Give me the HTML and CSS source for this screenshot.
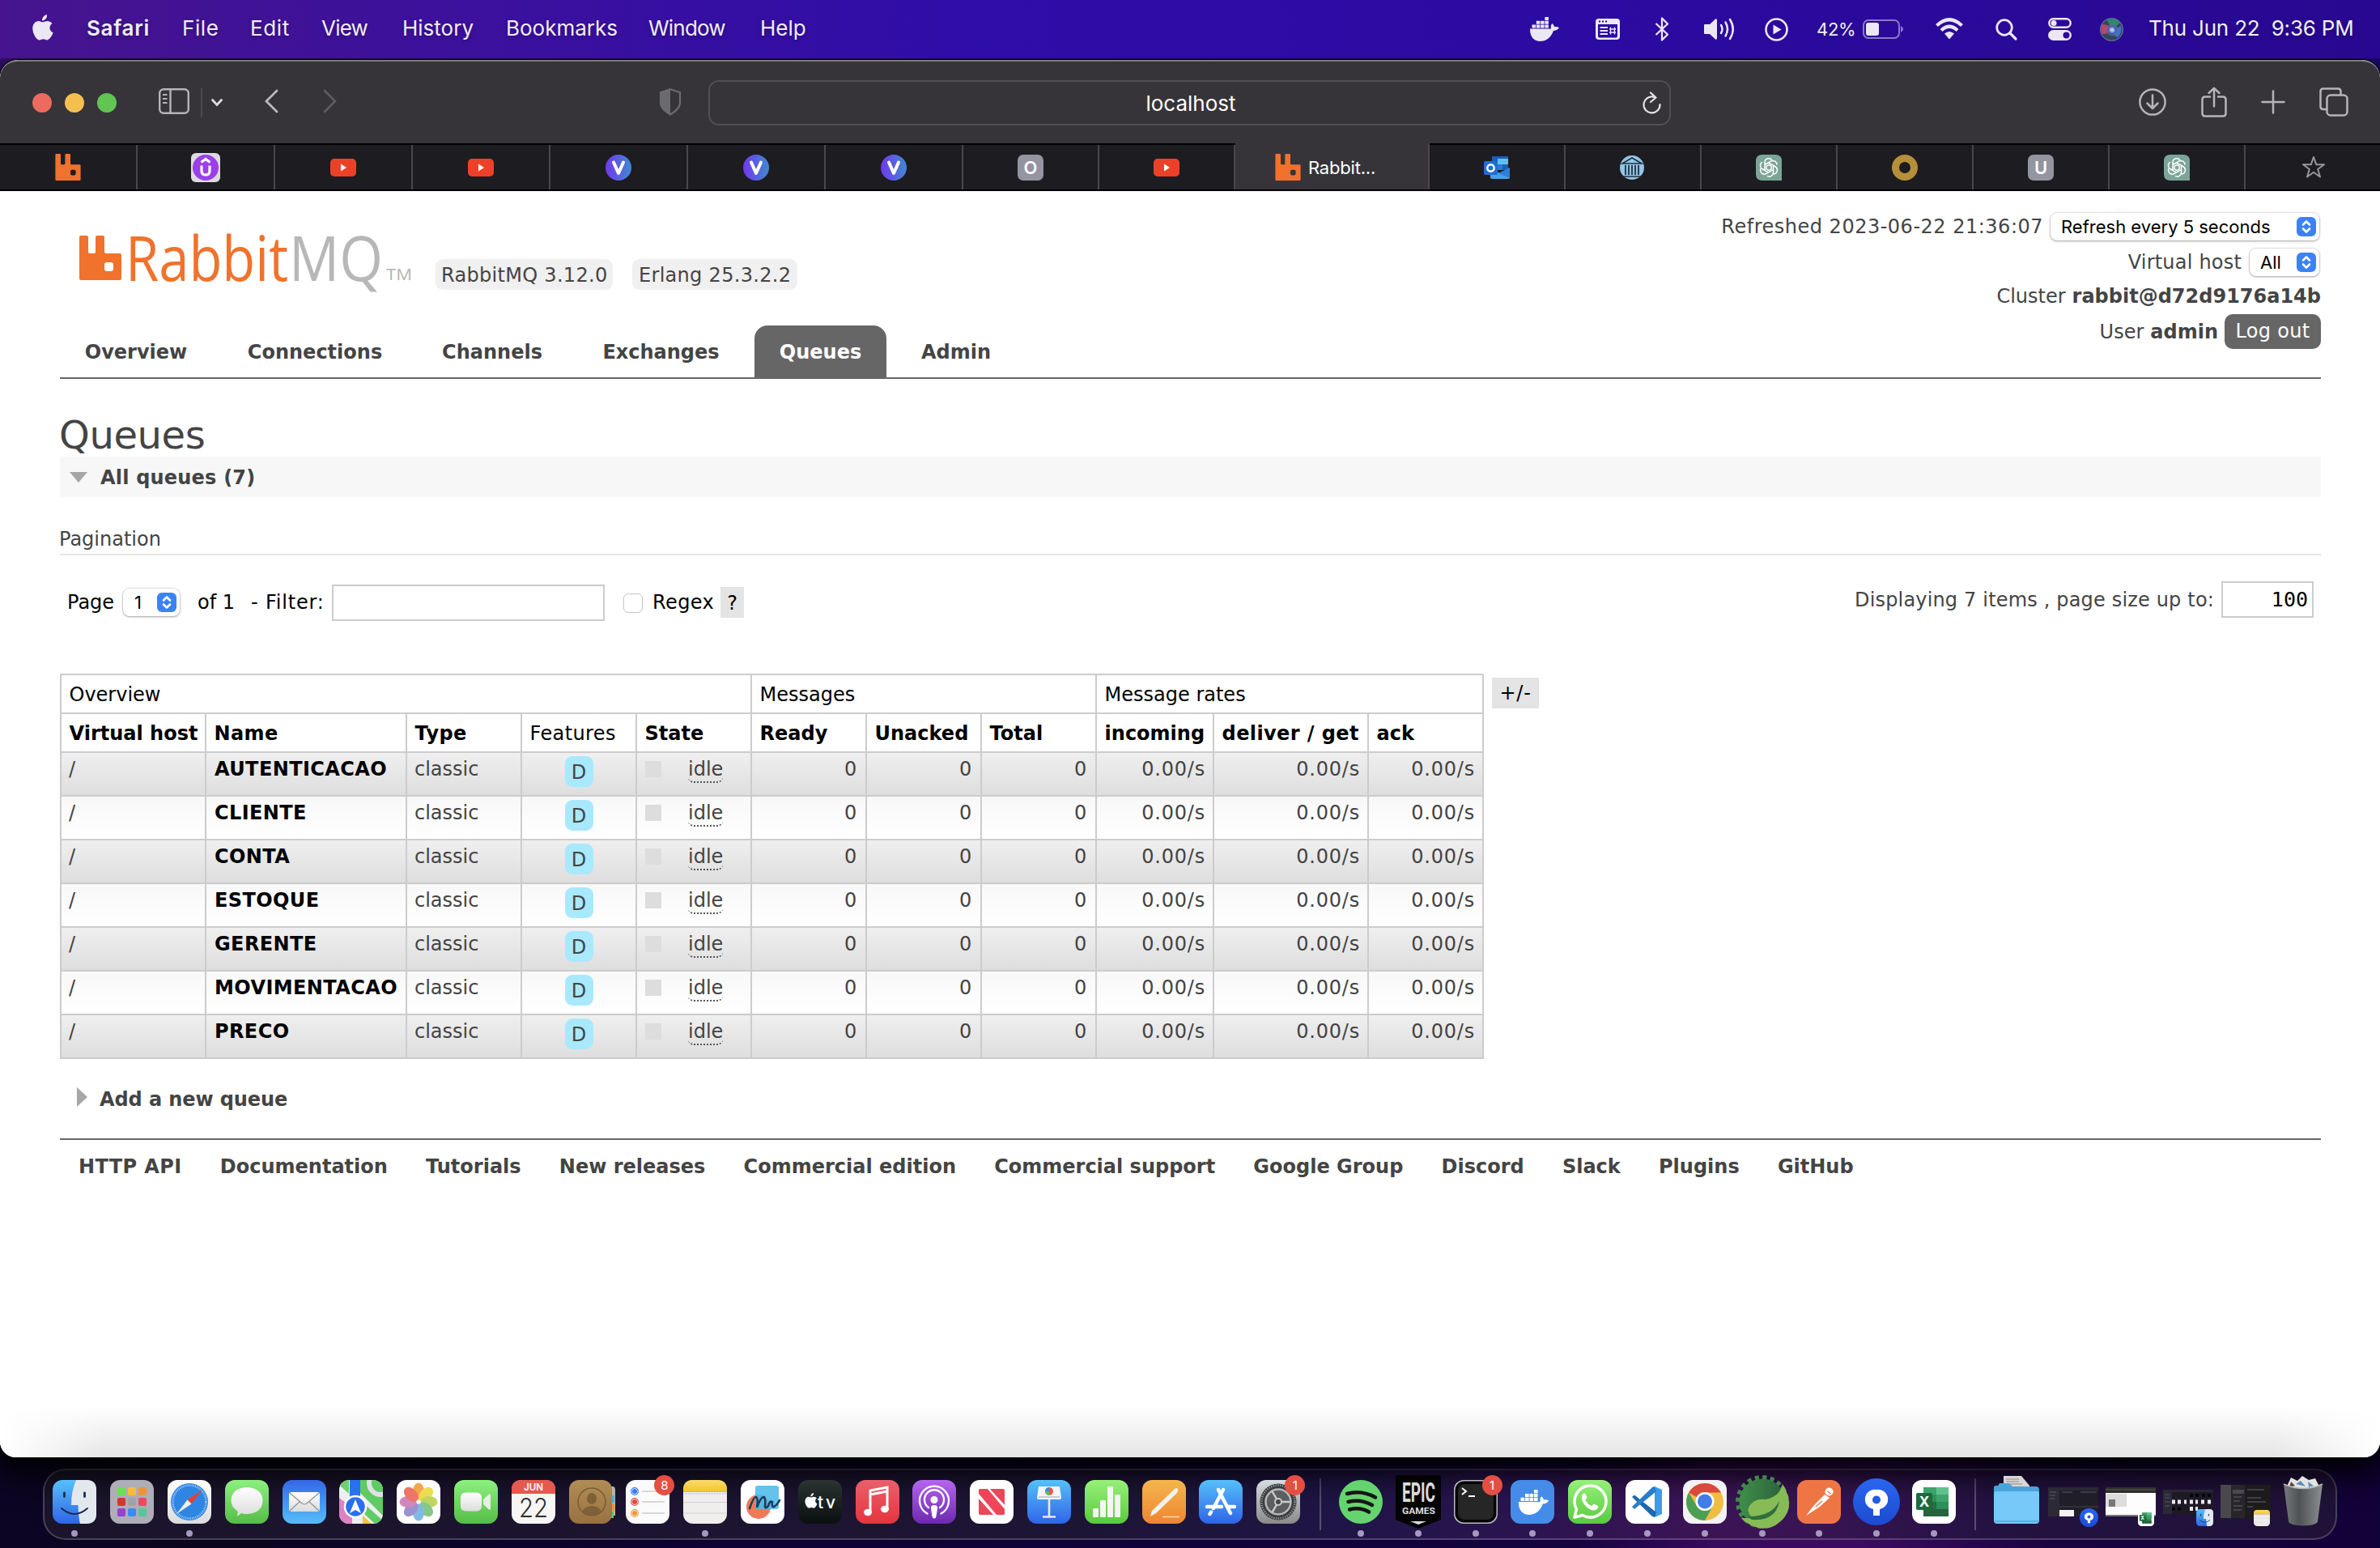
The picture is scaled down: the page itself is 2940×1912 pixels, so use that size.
FILE: index.html
```html
<!DOCTYPE html>
<html lang="en">
<head>
<meta charset="utf-8">
<title>RabbitMQ Management</title>
<link rel="stylesheet" href="styles.css">
</head>
<body>
<svg class="defs" width="0" height="0" aria-hidden="true">
  <defs>
    <linearGradient id="gBlue" x2="0" y2="1"><stop stop-color="#56c0fa"/><stop offset="1" stop-color="#2f64e8"/></linearGradient>
    <linearGradient id="gMail" x2="0" y2="1"><stop stop-color="#3567e8"/><stop offset="1" stop-color="#56bdf8"/></linearGradient>
    <linearGradient id="gGreen" x2="0" y2="1"><stop stop-color="#8cf07f"/><stop offset="1" stop-color="#55bd47"/></linearGradient>
    <linearGradient id="gLime" x2="0" y2="1"><stop stop-color="#97f07a"/><stop offset="1" stop-color="#58cb3c"/></linearGradient>
    <linearGradient id="gWhite" x2="0" y2="1"><stop stop-color="#fff"/><stop offset="1" stop-color="#dcdcdc"/></linearGradient>
    <linearGradient id="gRed" x2="0" y2="1"><stop stop-color="#e9606b"/><stop offset="1" stop-color="#e6343f"/></linearGradient>
    <linearGradient id="gPurple" x2="0" y2="1"><stop stop-color="#b565ee"/><stop offset="1" stop-color="#6c29b0"/></linearGradient>
    <linearGradient id="gOrange" x2="0" y2="1"><stop stop-color="#f5b64c"/><stop offset="1" stop-color="#ee8532"/></linearGradient>
    <linearGradient id="gBrown" x2="0" y2="1"><stop stop-color="#b08d55"/><stop offset="1" stop-color="#997142"/></linearGradient>
    <linearGradient id="gDark" x2="0" y2="1"><stop stop-color="#2a3432"/><stop offset="1" stop-color="#0b0f10"/></linearGradient>
    <linearGradient id="gSteel" x2="0" y2="1"><stop stop-color="#d5dce2"/><stop offset="1" stop-color="#8c8a88"/></linearGradient>
    <linearGradient id="gNote" x2="0" y2="1"><stop stop-color="#fbdc6b"/><stop offset="1" stop-color="#f5c52e"/></linearGradient>
    <linearGradient id="gSpring"><stop stop-color="#3f8f4a"/><stop offset="1" stop-color="#2c5f3c"/></linearGradient>
    <linearGradient id="gBin"><stop stop-color="#77797c"/><stop offset=".4" stop-color="#4f5255"/><stop offset="1" stop-color="#8d9093"/></linearGradient>
    <linearGradient id="gTree" x2="0" y2="1"><stop stop-color="#2a66f0"/><stop offset="1" stop-color="#1c4bd0"/></linearGradient>
    <linearGradient id="gV"><stop stop-color="#7138f0"/><stop offset="1" stop-color="#3f8ad0"/></linearGradient>
    <radialGradient id="gSiri"><stop stop-color="#fff"/><stop offset=".35" stop-color="#8fb9f0"/><stop offset=".65" stop-color="#4c4fae"/><stop offset="1" stop-color="#5a7f8f"/></radialGradient>
    <symbol id="rabbit" viewBox="0 0 52 55"><path fill="#f0722c" fill-rule="evenodd" d="M2 0H9Q11 0 11 2V20Q11 22 13 22H18Q20 22 20 20V2Q20 0 22 0H29Q31 0 31 2V20Q31 22 33 22H50Q52 22 52 24V53Q52 55 50 55H2Q0 55 0 53V2Q0 0 2 0ZM34 33Q31 33 31 36V41Q31 44 34 44H39Q42 44 42 41V36Q42 33 39 33Z"/></symbol>
    <symbol id="youtube" viewBox="0 0 32 32"><rect y="5" width="32" height="22" rx="5" fill="#ec4128"/><path d="M13 11.500V20.500L20 16Z" fill="#fff"/></symbol>
    <symbol id="vmark" viewBox="0 0 32 32"><circle cx="16" cy="16" r="16" fill="url(#gV)"/><path d="M10 9.500L16 23L22 9.500" fill="none" stroke="#fff" stroke-width="4" stroke-linecap="round" stroke-linejoin="round"/></symbol>
    <symbol id="gpt" viewBox="0 0 32 32"><path d="M8 0H24Q32 0 32 8V32H8Q0 32 0 24V8Q0 0 8 0Z" fill="#7aa597"/><g fill="none" stroke="#fff" stroke-width="1.500"><path id="petal" d="M11 19V9.800A5 5 0 0 1 20 6.800M11 12.500L18.500 8.200A5 5 0 0 1 26 12.500"/><use href="#petal" transform="rotate(120 16 16)"/><use href="#petal" transform="rotate(240 16 16)"/><path d="M16 12.500L19 14.200V17.800L16 19.500L13 17.800V14.200Z"/></g></symbol>
    <symbol id="whale" viewBox="0 0 36 30"><path d="M0 14.500H26Q25 10 27.500 8Q29.500 9.500 30 12Q33.500 11.500 36 13Q34.500 16.500 29 17Q24 30 12 30Q0 29 0 14.500Z"/><path d="M2.500 9.500h4.500v4h-4.500zM7.800 9.500h4.500v4h-4.500zM13.100 9.500h4.500v4h-4.500zM18.400 9.500h4.500v4h-4.500zM7.800 4.800h4.500v4h-4.500zM13.100 4.800h4.500v4h-4.500zM18.400 4.800h4.500v4h-4.500zM18.400 0h4.500v4h-4.500z"/></symbol>
    <symbol id="apple" viewBox="0 0 26 32"><path d="M18 0Q18.500 3 16.500 5.200Q14.500 7.500 12 7.400Q11.800 4.500 13.700 2.400Q15.500 .3 18 0ZM24.500 11Q21.500 13 21.500 16.500Q21.600 20.700 25.600 22.300Q24.800 25 23 27.600Q20.700 31.300 18.400 31.400Q17 31.400 15.600 30.700Q13.500 29.800 11.300 30.700Q9.700 31.500 8.500 31.500Q6 31.400 3.300 27.300Q.2 22.500 .2 17.300Q.3 12.500 3 10Q5 8.100 7.600 8.100Q9.300 8.100 11 8.900Q13 9.600 15 8.700Q17.200 7.800 19 7.900Q22.600 8.200 24.500 11Z"/></symbol>
    <symbol id="updown" viewBox="0 0 24 24"><rect width="24" height="24" rx="6" fill="#3b82f6"/><path d="M8 9.500L12 5.500L16 9.500M8 14.500L12 18.500L16 14.500" fill="none" stroke="#fff" stroke-width="2.600" stroke-linecap="round" stroke-linejoin="round"/></symbol>
    <symbol id="finder" viewBox="0 0 54 54"><rect width="54" height="54" rx="12" fill="url(#gBlue)"/><path d="M29 0H42Q54 0 54 12V42Q54 54 42 54H34Q32 46 31.500 31H23Q23 14 29 0Z" fill="#e3e8ef"/><path d="M14.500 16V20.500M39.500 16V20.500" stroke="#1c2b45" stroke-width="2.800" stroke-linecap="round"/><path d="M11 35Q27 49 43 35" fill="none" stroke="#1c2b45" stroke-width="2" stroke-linecap="round"/></symbol>
    <symbol id="notes" viewBox="0 0 54 54"><rect width="54" height="54" rx="12" fill="#efeeec"/><path d="M0 14V12Q0 0 12 0H42Q54 0 54 12V14Z" fill="url(#gNote)"/><path d="M0 14.500H54" stroke="#b9b5a8" stroke-width="1.200"/><path d="M2 17H53" stroke="#aaa" stroke-dasharray="1 1"/><path d="M0 27.500H54M0 41H54" stroke="#d2d1cf" stroke-width="1.200"/></symbol>
    <symbol id="tree" viewBox="0 0 58 58"><circle cx="29" cy="29" r="29" fill="url(#gTree)"/><path d="M29 14A12 12 0 0 1 33 38V46H25V38A12 12 0 0 1 29 14Z" fill="#fff"/><circle cx="29" cy="26.500" r="5" fill="#235be4"/></symbol>
    <symbol id="excel" viewBox="0 0 54 54"><rect width="54" height="54" rx="12" fill="#fff"/><path d="M14 9H45V45H14Z" fill="#2d8f59"/><path d="M30 9H45V18H30Z" fill="#5ec38a"/><path d="M30 18H45V27H30ZM14 9H30V18H14Z" fill="#3ea36c"/><path d="M14 36H45V45H14Z" fill="#27633f"/><path d="M14 27H30V36H14Z" fill="#2a6b43"/><rect x="5" y="16" width="20" height="21" rx="2" fill="#1d6b3d"/><text x="15" y="32.500" text-anchor="middle" font-size="17" font-weight="700" fill="#fff">X</text></symbol>
  </defs>
</svg>

<header class="menubar">
  <svg class="apple" width="26" height="32" fill="#ece7f4"><use href="#apple"/></svg>
  <nav class="menus">
    <span class="app">Safari</span><span class="loose">File</span><span class="loose">Edit</span><span class="tight">View</span><span>History</span><span>Bookmarks</span><span class="tight">Window</span><span>Help</span>
  </nav>
  <div class="status">
    <svg width="36" height="30" fill="#ece7f4"><use href="#whale"/></svg>
    <svg width="30" height="26" viewBox="0 0 30 26"><path fill="#ece7f4" fill-rule="evenodd" d="M4 0H26Q30 0 30 4V22Q30 26 26 26H4Q0 26 0 22V4Q0 0 4 0ZM3 7V21.500Q3 23.500 5 23.500H25Q27 23.500 27 21.500V7ZM4 2.500V4.500H6V2.500ZM8 2.500V4.500H10V2.500ZM12 2.500V4.500H14V2.500Z"/><path d="M5.500 11H15M5.500 15H15M5.500 19H15" stroke="#ece7f4" stroke-width="2"/><path d="M18.500 10.500V19.500M23.500 10.500V19.500M17 13H25M17 17H25" stroke="#ece7f4" stroke-width="1.400"/></svg>
    <svg width="18" height="30" viewBox="0 0 18 30"><path d="M1.500 8L16 21.500L9 28.500V1.500L16 8.500L1.500 22" fill="none" stroke="#ece7f4" stroke-width="2.300" stroke-linejoin="round"/></svg>
    <svg width="40" height="30" viewBox="0 0 40 30"><path d="M0 10Q0 9 1 9H7L14 2.500Q16 1.500 16 4V26Q16 28.500 14 27.500L7 21H1Q0 21 0 20Z" fill="#ece7f4"/><path d="M21 10Q24 15 21 20M26.500 6.500Q31.500 15 26.500 23.500M32 3Q39.500 15 32 27" fill="none" stroke="#ece7f4" stroke-width="2.500" stroke-linecap="round"/></svg>
    <svg width="29" height="29" viewBox="0 0 29 29"><circle cx="14.500" cy="14.500" r="13" fill="none" stroke="#ece7f4" stroke-width="2.600"/><path d="M10.500 8.500V20.500L20.500 14.500Z" fill="#ece7f4"/></svg>
    <div class="power"><span>42%</span><svg width="50" height="24" viewBox="0 0 50 24"><rect x="1" y="1" width="44" height="22" rx="6" fill="none" stroke="#ece7f4" stroke-opacity=".5" stroke-width="2"/><rect x="4" y="4" width="16" height="16" rx="3" fill="#ece7f4"/><path d="M47 8Q50 9.500 50 12Q50 14.500 47 16Z" fill="#ece7f4" opacity=".5"/></svg></div>
    <svg width="34" height="26" viewBox="0 0 34 26"><path d="M1.500 8.500Q17 -6 32.500 8.500M7 14.500Q17 5 27 14.500" fill="none" stroke="#ece7f4" stroke-width="4.200"/><path d="M11 18.500Q17 13.500 23 18.500L17 25.500Z" fill="#ece7f4"/></svg>
    <svg width="27" height="27" viewBox="0 0 27 27"><circle cx="11" cy="11" r="9.300" fill="none" stroke="#ece7f4" stroke-width="2.700"/><path d="M18 18L25 25" stroke="#ece7f4" stroke-width="3.200" stroke-linecap="round"/></svg>
    <svg width="29" height="28" viewBox="0 0 29 28"><rect x="1.300" y="1.300" width="26.400" height="10.400" rx="5.200" fill="none" stroke="#ece7f4" stroke-width="2.400"/><circle cx="7" cy="6.500" r="3.500" fill="#ece7f4"/><rect y="15" width="29" height="13" rx="6.500" fill="#ece7f4"/><circle cx="22.500" cy="21.500" r="4" fill="#2b0b98"/></svg>
    <svg width="29" height="29" viewBox="0 0 29 29"><circle cx="14.500" cy="14.500" r="14" fill="#34465e" stroke="#6f8a9a"/><path d="M3 8Q12 8 14.500 14.500Q8 21 3 20Q0 14 3 8Z" fill="#d9456f" opacity=".8"/><path d="M8 3Q18 -1 25 6Q20 11 14.500 14Q12 6 8 3Z" fill="#2f9e76" opacity=".75"/><path d="M26 10Q28 18 22 24Q16 22 14.500 15Q20 14 26 10Z" fill="#3f7cf0" opacity=".8"/><circle cx="15" cy="15" r="7" fill="url(#gSiri)" opacity=".85"/></svg>
    <span class="clock">Thu Jun 22&nbsp; 9:36 PM</span>
  </div>
</header>

<main class="window">
  <div class="toolbar">
    <div class="lights"><i class="close"></i><i class="min"></i><i class="max"></i></div>
    <svg class="sidebar" width="38" height="32" viewBox="0 0 38 32" fill="none" stroke="#b5b4b8" stroke-width="2.400"><rect x="1.200" y="1.200" width="35.600" height="29.600" rx="5"/><path d="M14.500 1V31"/><path d="M5 8H10.500M5 13H10.500M5 18H10.500" stroke-width="2"/></svg>
    <i class="bar"></i>
    <svg class="chev" width="14" height="10" viewBox="0 0 14 10"><path d="M1.500 1.500L7 7.500L12.500 1.500" fill="none" stroke="#dddce0" stroke-width="2.800" stroke-linecap="round"/></svg>
    <svg class="back" width="17" height="30" viewBox="0 0 17 30"><path d="M15 2L2 15L15 28" fill="none" stroke="#b9b8bc" stroke-width="2.800" stroke-linecap="round"/></svg>
    <svg class="fwd" width="17" height="30" viewBox="0 0 17 30"><path d="M2 2L15 15L2 28" fill="none" stroke="#5d5c61" stroke-width="2.600" stroke-linecap="round"/></svg>
    <svg class="shield" width="28" height="34" viewBox="0 0 28 34"><path d="M14 1.200L26 5V19Q25 26 14 32.500Q3 26 2 19V5Z" fill="none" stroke="#6b6a6f" stroke-width="2.200"/><path d="M14 1L1.500 5V19Q3 26 14 33Z" fill="#6b6a6f"/></svg>
    <div class="address"><span>localhost</span><svg width="24" height="27" viewBox="0 0 24 27"><path d="M16 7.500A10 10 0 1 0 21.500 16M10 1.500L16.500 7.500L10 13" fill="none" stroke="#e4e3e6" stroke-width="2.200" stroke-linecap="round" stroke-linejoin="round"/></svg></div>
    <div class="tools">
      <svg width="34" height="34" viewBox="0 0 34 34"><circle cx="17" cy="17" r="15.600"/><path d="M17 8.500V25M10.500 18.500L17 25L23.500 18.500"/></svg>
      <svg width="32" height="38" viewBox="0 0 32 38"><path d="M11 12.500H5Q1.500 12.500 1.500 16V33Q1.500 36.500 5 36.500H27Q30.500 36.500 30.500 33V16Q30.500 12.500 27 12.500H21M16 24.500V2M9.500 8L16 1.800L22.500 8"/></svg>
      <svg width="28" height="28" viewBox="0 0 28 28"><path d="M14 .5V27.500M.5 14H27.500"/></svg>
      <svg width="36" height="36" viewBox="0 0 36 36"><rect x="9.500" y="9.500" width="25" height="25" rx="4.500"/><path d="M9 27H5Q1.500 27 1.500 23.500V5Q1.500 1.500 5 1.500H23Q26.500 1.500 26.500 5V9"/></svg>
    </div>
  </div>
  <div class="tabs">
    <div class="tab w170"><svg width="32" height="33"><use href="#rabbit"/></svg></div>
    <div class="tab w170"><svg width="36" height="36" viewBox="0 0 36 36"><rect width="36" height="36" rx="6" fill="#dedbe0"/><circle cx="18" cy="18" r="16" fill="#9b3fe8"/><path d="M13 15.500V22Q13 27 18 27Q23 27 23 22V15.500M12.500 11.500L18 7.500L23.500 11.500" fill="none" stroke="#fff" stroke-width="3.200"/></svg></div>
    <div class="tab w170"><svg width="32" height="32"><use href="#youtube"/></svg></div>
    <div class="tab w170"><svg width="32" height="32"><use href="#youtube"/></svg></div>
    <div class="tab w170"><svg width="32" height="32"><use href="#vmark"/></svg></div>
    <div class="tab w170"><svg width="32" height="32"><use href="#vmark"/></svg></div>
    <div class="tab w170"><svg width="32" height="32"><use href="#vmark"/></svg></div>
    <div class="tab"><b class="letter">O</b></div>
    <div class="tab"><svg width="32" height="32"><use href="#youtube"/></svg></div>
    <div class="tab active"><svg width="32" height="33"><use href="#rabbit"/></svg><span>Rabbit...</span></div>
    <div class="tab"><svg width="32" height="30" viewBox="0 0 32 30"><path d="M10 1H30V18H10Z" fill="#1a5fb8"/><path d="M17 4H30V11H17Z" fill="#5cc0f5"/><path d="M17 11H23V18H17Z" fill="#2b7cd3"/><path d="M8 16L20 22L32 15V27Q32 29 30 29H10Q8 29 8 27Z" fill="#4a9fe8"/><path d="M18 22L32 15V28Z" fill="#2f7fd6"/><rect y="7" width="17" height="17" rx="2" fill="#1f6fd0"/><circle cx="8.500" cy="15.500" r="4.200" fill="none" stroke="#fff" stroke-width="2.400"/></svg></div>
    <div class="tab"><svg width="34" height="34" viewBox="0 0 34 34"><circle cx="16" cy="17" r="15" fill="#93c5e6"/><path d="M4 12L16 5L28 12ZM5 28H27" fill="none" stroke="#20303c" stroke-width="1.600"/><path d="M8 14V26M12 14V26M16 14V26M20 14V26M24 14V26" stroke="#20303c" stroke-width="1.800"/></svg></div>
    <div class="tab"><svg width="32" height="32"><use href="#gpt"/></svg></div>
    <div class="tab"><svg width="32" height="32" viewBox="0 0 32 32"><circle cx="16" cy="16" r="11.500" fill="none" stroke="#b68f3b" stroke-width="9"/></svg></div>
    <div class="tab"><b class="letter">U</b></div>
    <div class="tab"><svg width="32" height="32"><use href="#gpt"/></svg></div>
    <div class="tab star"><svg width="30" height="29" viewBox="0 0 30 29"><path d="M15 2L18.200 11.200H28L20.200 17L23 26.500L15 20.800L7 26.500L9.800 17L2 11.200H11.800Z" fill="none" stroke="#98979c" stroke-width="2" stroke-linejoin="round"/></svg></div>
  </div>

  <div class="page">
    <div class="head">
      <div class="left">
        <div class="brand">
          <svg class="logo" width="412" height="84" viewBox="0 0 412 84"><use href="#rabbit" x="0" y="11" width="52" height="55"/><g font-family="'Open Sans', sans-serif"><text x="57" y="66.500" font-size="76" textLength="201" lengthAdjust="spacingAndGlyphs" fill="#f0722c">Rabbit</text><text x="259" y="66.500" font-size="76" textLength="116" lengthAdjust="spacingAndGlyphs" fill="#b7b7b7">MQ</text><text x="379" y="66" font-size="20" textLength="32" lengthAdjust="spacingAndGlyphs" fill="#b4b4b4">TM</text></g></svg>
          <span class="pill">RabbitMQ 3.12.0</span><span class="pill erl">Erlang 25.3.2.2</span>
        </div>
        <nav class="nav"><a>Overview</a><a>Connections</a><a>Channels</a><a>Exchanges</a><a class="on">Queues</a><a>Admin</a></nav>
      </div>
      <div class="info">
        <div class="r1"><span class="stamp">Refreshed 2023-06-22 21:36:07</span><span class="select s1">Refresh every 5 seconds<svg width="24" height="24"><use href="#updown"/></svg></span></div>
        <div class="r1"><span class="vh">Virtual host</span><span class="select s2">All<svg width="24" height="24"><use href="#updown"/></svg></span></div>
        <div class="r3"><span>Cluster</span><b>rabbit@d72d9176a14b</b></div>
        <div class="r4"><span>User</span><b>admin</b><button class="logout">Log out</button></div>
      </div>
    </div>

    <h1>Queues</h1>
    <h2><svg width="22" height="13" viewBox="0 0 22 13"><path d="M0 0H22L11 13Z" fill="#a6a6a6"/></svg>All queues (7)</h2>
    <h3>Pagination</h3>
    <div class="pager">
      <div class="ctl">
        <span class="pg">Page</span><span class="select s3">1<svg width="24" height="24"><use href="#updown"/></svg></span><span class="of">of 1</span><span class="fl">- Filter:</span><span class="input"></span><i class="check"></i><span class="rx">Regex</span><span class="help">?</span>
      </div>
      <div class="size"><span>Displaying 7 items , page size up to:</span><span class="input num">100</span></div>
    </div>

    <div class="list">
      <table>
        <colgroup><col class="c179"><col class="c248"><col class="c142"><col class="c142"><col class="c142"><col class="c142"><col class="c142"><col class="c142"><col class="c145"><col class="c191"><col class="c142"></colgroup>
        <thead>
          <tr><th colspan="5" class="n">Overview</th><th colspan="3" class="n">Messages</th><th colspan="3" class="n">Message rates</th></tr>
          <tr><th>Virtual host</th><th class="sp">Name</th><th class="sp">Type</th><th class="n sp">Features</th><th>State</th><th>Ready</th><th>Unacked</th><th>Total</th><th>incoming</th><th class="sp">deliver / get</th><th>ack</th></tr>
        </thead>
        <tbody>
          <tr><td>/</td><td class="q">AUTENTICACAO</td><td>classic</td><td class="f"><b>D</b></td><td><div class="st"><i></i><span>idle</span></div></td><td class="r">0</td><td class="r">0</td><td class="r">0</td><td class="r">0.00/s</td><td class="r">0.00/s</td><td class="r">0.00/s</td></tr>
          <tr><td>/</td><td class="q">CLIENTE</td><td>classic</td><td class="f"><b>D</b></td><td><div class="st"><i></i><span>idle</span></div></td><td class="r">0</td><td class="r">0</td><td class="r">0</td><td class="r">0.00/s</td><td class="r">0.00/s</td><td class="r">0.00/s</td></tr>
          <tr><td>/</td><td class="q">CONTA</td><td>classic</td><td class="f"><b>D</b></td><td><div class="st"><i></i><span>idle</span></div></td><td class="r">0</td><td class="r">0</td><td class="r">0</td><td class="r">0.00/s</td><td class="r">0.00/s</td><td class="r">0.00/s</td></tr>
          <tr><td>/</td><td class="q">ESTOQUE</td><td>classic</td><td class="f"><b>D</b></td><td><div class="st"><i></i><span>idle</span></div></td><td class="r">0</td><td class="r">0</td><td class="r">0</td><td class="r">0.00/s</td><td class="r">0.00/s</td><td class="r">0.00/s</td></tr>
          <tr><td>/</td><td class="q">GERENTE</td><td>classic</td><td class="f"><b>D</b></td><td><div class="st"><i></i><span>idle</span></div></td><td class="r">0</td><td class="r">0</td><td class="r">0</td><td class="r">0.00/s</td><td class="r">0.00/s</td><td class="r">0.00/s</td></tr>
          <tr><td>/</td><td class="q">MOVIMENTACAO</td><td>classic</td><td class="f"><b>D</b></td><td><div class="st"><i></i><span>idle</span></div></td><td class="r">0</td><td class="r">0</td><td class="r">0</td><td class="r">0.00/s</td><td class="r">0.00/s</td><td class="r">0.00/s</td></tr>
          <tr><td>/</td><td class="q">PRECO</td><td>classic</td><td class="f"><b>D</b></td><td><div class="st"><i></i><span>idle</span></div></td><td class="r">0</td><td class="r">0</td><td class="r">0</td><td class="r">0.00/s</td><td class="r">0.00/s</td><td class="r">0.00/s</td></tr>
        </tbody>
      </table>
      <span class="pm">+/-</span>
    </div>

    <div class="add"><svg width="13" height="24" viewBox="0 0 13 24"><path d="M0 0L13 12L0 24Z" fill="#a6a6a6"/></svg>Add a new queue</div>
    <footer class="foot"><a class="api">HTTP API</a><a>Documentation</a><a>Tutorials</a><a>New releases</a><a>Commercial edition</a><a>Commercial support</a><a>Google Group</a><a>Discord</a><a>Slack</a><a>Plugins</a><a>GitHub</a></footer>
  </div>
</main>

<div class="dock">
  <div class="slot run"><svg class="ic"><use href="#finder"/></svg></div>
  <div class="slot"><svg class="ic" viewBox="0 0 54 54"><rect width="54" height="54" rx="12" fill="#aeadb8"/><g><rect x="9" y="9" width="10" height="10" rx="2" fill="#6be052"/><rect x="22" y="9" width="10" height="10" rx="2" fill="#f5bb3a"/><rect x="35" y="9" width="10" height="10" rx="2" fill="#ee9436"/><rect x="9" y="22" width="10" height="10" rx="2" fill="#d8352f"/><rect x="22" y="22" width="10" height="10" rx="2" fill="#9fa3a8"/><rect x="35" y="22" width="10" height="10" rx="2" fill="#f0475e"/><rect x="9" y="35" width="10" height="10" rx="2" fill="#9343d3"/><rect x="22" y="35" width="10" height="10" rx="2" fill="#3a8bf5"/><rect x="35" y="35" width="10" height="10" rx="2" fill="#57c79a"/></g></svg></div>
  <div class="slot run"><svg class="ic" viewBox="0 0 54 54"><rect width="54" height="54" rx="12" fill="url(#gWhite)"/><circle cx="27" cy="27" r="23" fill="#2f86e2"/><circle cx="27" cy="27" r="20.500" fill="none" stroke="#bfe0fb" stroke-width="2.500" stroke-dasharray=".8 1.350"/><path d="M43 12L29.500 29.500L24.500 24.500Z" fill="#e8402f"/><path d="M11 42L24.500 24.500L29.500 29.500Z" fill="#f0f0f2"/></svg></div>
  <div class="slot"><svg class="ic" viewBox="0 0 54 54"><rect width="54" height="54" rx="12" fill="url(#gGreen)"/><path d="M27 9Q46 10 46.500 25.500Q46 41.500 26 42Q23 42 20 41Q18 43.500 14.500 44.500Q16.500 41 15.500 38.500Q7.500 33 7.500 25.500Q8 10 27 9Z" fill="url(#gWhite)"/></svg></div>
  <div class="slot"><svg class="ic" viewBox="0 0 54 54"><rect width="54" height="54" rx="12" fill="url(#gMail)"/><rect x="8" y="15" width="38" height="24" rx="3" fill="url(#gWhite)"/><path d="M9 16L24 29Q27 31 30 29L45 16M9 38L21 27M45 38L33 27" fill="none" stroke="#8f9296" stroke-width="1.200"/></svg></div>
  <div class="slot"><svg class="ic" viewBox="0 0 54 54"><clipPath id="mc"><rect width="54" height="54" rx="12"/></clipPath><g clip-path="url(#mc)"><rect width="54" height="54" fill="#eceef0"/><path d="M0 0H12V17L0 6Z" fill="#6fd06b"/><path d="M26 0H54V44L26 16Z" fill="#5fcb63"/><path d="M0 22L16 34V54H0Z" fill="#dd82c4"/><path d="M29 44L40 54H29Z" fill="#f3c43f"/><path d="M29 28L54 50V54H44L29 40Z" fill="#5fcb63"/><circle cx="51" cy="4" r="14" fill="none" stroke="#dfe1e4" stroke-width="6"/><path d="M13 0H26V30H13Z" fill="#2a6ff0"/><circle cx="20" cy="33" r="13" fill="#2a6ff0" stroke="#fff" stroke-width="2.500"/><path d="M20 24L27 41L20 37L13 41Z" fill="#fff"/></g></svg></div>
  <div class="slot"><svg class="ic" viewBox="0 0 54 54"><rect width="54" height="54" rx="12" fill="#fff"/><g opacity=".85"><ellipse cx="27" cy="14" rx="7" ry="10.500" fill="#f39a2d"/><ellipse cx="27" cy="14" rx="7" ry="10.500" fill="#ecd632" transform="rotate(45 27 27)"/><ellipse cx="27" cy="14" rx="7" ry="10.500" fill="#b5d04a" transform="rotate(90 27 27)"/><ellipse cx="27" cy="14" rx="7" ry="10.500" fill="#71bf75" transform="rotate(135 27 27)"/><ellipse cx="27" cy="14" rx="7" ry="10.500" fill="#6aaee0" transform="rotate(180 27 27)"/><ellipse cx="27" cy="14" rx="7" ry="10.500" fill="#8c80c8" transform="rotate(225 27 27)"/><ellipse cx="27" cy="14" rx="7" ry="10.500" fill="#c774b0" transform="rotate(270 27 27)"/><ellipse cx="27" cy="14" rx="7" ry="10.500" fill="#ea5f4c" transform="rotate(315 27 27)"/></g></svg></div>
  <div class="slot"><svg class="ic" viewBox="0 0 54 54"><rect width="54" height="54" rx="12" fill="url(#gGreen)"/><rect x="8" y="15.500" width="26" height="23" rx="6" fill="url(#gWhite)"/><path d="M36 24L43 17.500Q45 16.500 45 19V35Q45 37.500 43 36.500L36 30Z" fill="#e4f1e2"/></svg></div>
  <div class="slot"><svg class="ic" viewBox="0 0 54 54"><rect width="54" height="54" rx="12" fill="#f7f6f4"/><path d="M0 17V12Q0 0 12 0H42Q54 0 54 12V17Z" fill="#e6594f"/><text x="27" y="13" text-anchor="middle" font-size="11.500" font-weight="600" fill="#fff">JUN</text><text x="27" y="45.500" text-anchor="middle" font-size="32" font-weight="300" fill="#2e2e2e" textLength="36" lengthAdjust="spacingAndGlyphs">22</text></svg></div>
  <div class="slot"><svg class="ic" viewBox="0 0 54 54"><path d="M48 8H54Q57 8 57 13V44H48Z" fill="#b9b3a5"/><path d="M52 19h4v9h-4z" fill="#5aa9dd"/><path d="M52 29h4v9h-4z" fill="#f0913a"/><path d="M52 39h3v8h-3z" fill="#5ac85a"/><rect width="53" height="54" rx="12" fill="url(#gBrown)"/><circle cx="28" cy="27" r="17" fill="none" stroke="#7b5c33" stroke-width="1.500"/><ellipse cx="28" cy="23" rx="6" ry="7" fill="#7f6038"/><path d="M16 39Q20 32 28 32Q36 32 40 39Q35 44 28 44Q21 44 16 39Z" fill="#7f6038"/></svg></div>
  <div class="slot"><svg class="ic" viewBox="0 0 54 54"><rect width="54" height="54" rx="12" fill="#fbfbfb"/><g stroke="#b5b5b5" stroke-width="1.200"><path d="M20 14H48M20 27H48M20 41H48"/></g><g fill="none" stroke-width="1.200"><circle cx="11" cy="14" r="4.300" stroke="#3478f6"/><circle cx="11" cy="27" r="4.300" stroke="#dd4b3e"/><circle cx="11" cy="41" r="4.300" stroke="#ec9a3c"/></g><circle cx="11" cy="14" r="3" fill="#3478f6"/><circle cx="11" cy="27" r="3" fill="#dd4b3e"/><circle cx="11" cy="41" r="3" fill="#ec9a3c"/></svg><em>8</em></div>
  <div class="slot run"><svg class="ic"><use href="#notes"/></svg></div>
  <div class="slot"><svg class="ic" viewBox="0 0 54 54"><rect width="54" height="54" rx="12" fill="#fff"/><circle cx="22" cy="33" r="15" fill="#ef7a57"/><rect x="18" y="7" width="29" height="29" rx="3" fill="#4fb9ea" opacity=".88"/><path d="M11 35Q16 20 19 21Q22 23 20 34Q25 20 29 21Q31 24 30 33Q31 36 34 32Q36 25 39 27Q38 34 41 33Q45 31 48 25" fill="none" stroke="#14405e" stroke-width="2.600" stroke-linecap="round"/></svg></div>
  <div class="slot"><svg class="ic" viewBox="0 0 54 54"><rect width="54" height="54" rx="12" fill="url(#gDark)"/><use href="#apple" x="8" y="16" width="16" height="19" fill="#fff"/><text x="24" y="35" font-size="21" font-weight="500" fill="#fff" textLength="22">tv</text></svg></div>
  <div class="slot"><svg class="ic" viewBox="0 0 54 54"><rect width="54" height="54" rx="12" fill="url(#gRed)"/><path d="M18 40V13L39 9V36M18 18L39 14" fill="none" stroke="#fff" stroke-width="3"/><ellipse cx="15" cy="40" rx="5" ry="4.200" fill="#fff"/><ellipse cx="36" cy="36" rx="5" ry="4.200" fill="#fff"/></svg></div>
  <div class="slot"><svg class="ic" viewBox="0 0 54 54"><rect width="54" height="54" rx="12" fill="url(#gPurple)"/><g fill="none" stroke="#fff" stroke-width="2.300" stroke-linecap="round"><path d="M18.500 41.500A18 18 0 1 1 35.500 41.500M20 34A12 12 0 1 1 34 34"/></g><circle cx="27" cy="24.500" r="4.500" fill="#fff"/><path d="M27 31Q31.500 31 31 35L29.500 45Q29 47.500 27 47.500Q25 47.500 24.500 45L23 35Q22.500 31 27 31Z" fill="#fff"/></svg></div>
  <div class="slot"><svg class="ic" viewBox="0 0 54 54"><rect width="54" height="54" rx="12" fill="#fff"/><rect x="11" y="11" width="32" height="32" rx="2" fill="#ee4559"/><path d="M10 13L41 44H30L10 22ZM24 10L44 32V41L13 10Z" fill="#fff"/><path d="M13 11H22L43 36V41Q43 43 41 43H33L11 17V13Q11 11 13 11Z" fill="#ee4559"/></svg></div>
  <div class="slot"><svg class="ic" viewBox="0 0 54 54"><rect width="54" height="54" rx="12" fill="url(#gBlue)"/><path d="M27 22V45M19 45.500H35" stroke="#e6e9ee" stroke-width="2.600"/><path d="M14 8H40L42 22Q42 24 40 24H14Q12 24 12 22Z" fill="#f4f5f7"/><path d="M14 21H40" stroke="#b7bcc4" stroke-width="1.500"/><circle cx="27" cy="14" r="5" fill="#e9574c"/><path d="M27 14V9A5 5 0 0 0 22 14Z" fill="#3f8be8"/><path d="M27 14H22A5 5 0 0 0 27 19Z" fill="#62c252"/></svg></div>
  <div class="slot"><svg class="ic" viewBox="0 0 54 54"><rect width="54" height="54" rx="12" fill="url(#gLime)"/><g fill="#f3f6f1"><rect x="10" y="35" width="7" height="11" rx="1"/><rect x="19" y="25" width="7" height="21" rx="1"/><rect x="28" y="8" width="7" height="38" rx="1"/><rect x="37" y="18" width="7" height="28" rx="1"/></g></svg></div>
  <div class="slot"><svg class="ic" viewBox="0 0 54 54"><rect width="54" height="54" rx="12" fill="url(#gOrange)"/><path d="M10 45L12 38L40 11Q43 9 44 11Q45 13 43 16L17 41Z" fill="#f3f1ee"/><path d="M25 45.500H46" stroke="#fbd9ad" stroke-width="1.500"/></svg></div>
  <div class="slot"><svg class="ic" viewBox="0 0 54 54"><rect width="54" height="54" rx="12" fill="url(#gBlue)"/><g stroke="#fff" stroke-width="4.400" stroke-linecap="round"><path d="M24 12L39 41M30 12L18 35M10 33H28M37 33H44M15 39.500L13.500 42"/></g></svg></div>
  <div class="slot"><svg class="ic" viewBox="0 0 54 54"><rect width="54" height="54" rx="12" fill="url(#gSteel)"/><circle cx="27" cy="27" r="22.500" fill="#3b3c3e"/><circle cx="27" cy="27" r="20.500" fill="none" stroke="#8d8e90" stroke-width="2.500" stroke-dasharray="1.400 1.400"/><circle cx="27" cy="27" r="15.500" fill="#5d5e60" stroke="#b7b8ba" stroke-width="2.500"/><path d="M27 27H42M27 27L19.500 14M27 27L19.500 40" stroke="#c9cacc" stroke-width="2.500"/><circle cx="27" cy="27" r="4" fill="#454648" stroke="#c9cacc" stroke-width="2"/></svg><em>1</em></div>
  <i class="sep"></i>
  <div class="slot run"><svg class="ic" viewBox="0 0 54 54"><circle cx="27" cy="27" r="27" fill="#65d46e"/><path d="M10 17Q28 12 45 21.500M11.500 27Q27 23 41 31M13 36.500Q26 33 37 39.500" fill="none" stroke="#151515" stroke-width="4.500" stroke-linecap="round"/></svg></div>
  <div class="slot run"><svg class="ic" viewBox="0 0 54 54"><path d="M2 -6H52Q55 -6 55 -3V49L27 60L-1 49V-3Q-1 -6 2 -6Z" fill="#030303"/><g fill="#dcdcdc" font-weight="700" font-family="Roboto, sans-serif"><text x="7" y="27" font-size="33" textLength="41" lengthAdjust="spacingAndGlyphs">EPIC</text><text x="7" y="42" font-size="11.500" textLength="41" lengthAdjust="spacingAndGlyphs">GAMES</text></g><path d="M17 51H37L27 55Z" fill="#dcdcdc"/></svg></div>
  <div class="slot run"><svg class="ic" viewBox="0 0 54 54"><rect width="54" height="54" rx="12" fill="#b9babd"/><rect x="1.500" y="1.500" width="51" height="51" rx="11" fill="#050505"/><rect x="5" y="5" width="44" height="44" rx="8" fill="#262626"/><path d="M10 10L15 14L10 18M18 20H26" fill="none" stroke="#fff" stroke-width="2"/></svg><em>1</em></div>
  <div class="slot run"><svg class="ic" viewBox="0 0 54 54"><rect width="54" height="54" rx="12" fill="#448ce8"/><use href="#whale" x="8" y="12" width="41" height="31" fill="#fff"/></svg></div>
  <div class="slot run"><svg class="ic" viewBox="0 0 54 54"><rect width="54" height="54" rx="12" fill="url(#gLime)"/><path d="M8 46L10.500 36A19.500 19.500 0 1 1 18 43.500Z" fill="none" stroke="#fff" stroke-width="3.500" stroke-linejoin="round"/><path d="M17 20Q18 15.500 21 16.500L23.500 21.500L21.500 25Q24 30 29 32L32 29.500L37 32Q38 35 34 37Q29 39 22 32.500Q16 26 17 20Z" fill="#fff"/></svg></div>
  <div class="slot run"><svg class="ic" viewBox="0 0 54 54"><rect width="54" height="54" rx="12" fill="#fff"/><path d="M36 8L45 12V42L36 46Z" fill="#3d9be9"/><path d="M8 21L11 18.500L38 40L36 46L33 45Z" fill="#1f66ae"/><path d="M8 33L11 36L38 14L36 8L33 9Z" fill="#2a7dc9"/></svg></div>
  <div class="slot run"><svg class="ic" viewBox="0 0 54 54"><rect width="54" height="54" rx="12" fill="#f3f2f5"/><circle cx="27" cy="27" r="23" fill="#f0bd42"/><path d="M27 27L7.100 15.500A23 23 0 0 1 46.900 15.500Z" fill="#d9493c"/><path d="M7.100 15.500A23 23 0 0 0 27 50L36.500 33L27 27L17 32Z" fill="#4b9f55"/><path d="M27 15.500H46.900L37 27Z" fill="#f0bd42"/><circle cx="27" cy="26.500" r="11.500" fill="#fff"/><circle cx="27" cy="26.500" r="9" fill="#3f7de8"/></svg></div>
  <div class="slot run"><svg class="ic" viewBox="0 0 54 54"><circle cx="27" cy="27" r="30" fill="none" stroke="#3f8a49" stroke-width="6" stroke-dasharray="5 4.425"/><circle cx="27" cy="27" r="28.500" fill="url(#gSpring)"/><path d="M52 5Q72 38 43 56Q24 66 4 50Q-2 45 5 47Q36 50 52 5Z" fill="#87bb55"/><path d="M50 12Q56 50 18 49Q2 38 16 27Q22 23 31 24Q43 22 50 12Z" fill="#87bb55"/><path d="M8 45Q38 46 48 26Q44 51 14 49Z" fill="#2f6e3e"/></svg></div>
  <div class="slot run"><svg class="ic" viewBox="0 0 54 54"><rect width="54" height="54" rx="12" fill="#ee7544"/><circle cx="39.500" cy="14.500" r="5" fill="#fff"/><path d="M34 18L40 22L28 33L11 44L21 31Z" fill="#fff"/><path d="M23 33L31 26M37 14L42 17" stroke="#ee7544" stroke-width="1.300"/></svg></div>
  <div class="slot run"><svg class="ic wide" viewBox="0 0 58 58"><use href="#tree"/></svg></div>
  <div class="slot run"><svg class="ic"><use href="#excel"/></svg></div>
  <i class="sep"></i>
  <div class="slot"><svg class="ic" viewBox="0 0 54 54"><path d="M11 -5H33L43 7V16H11Z" fill="#d9d6d6"/><path d="M14 -1H30M14 2H30M14 5H34" stroke="#8e8b8b"/><path d="M-1 10Q-1 7 1 7H4L6 4H18L22 8H51Q55 8 55 12V22H-1Z" fill="#4aa3da"/><path d="M-1 16Q-1 14 2 14H52Q55 14 55 16V50Q55 54 51 54H3Q-1 54 -1 50Z" fill="#76c9f8"/><path d="M0 51H54" stroke="#4ea7dc" stroke-width="1.500"/></svg></div>
  <div class="slot"><svg class="ic" viewBox="0 0 54 54"><rect x="-4" y="9" width="62" height="36" fill="#201e28"/><path d="M-4 9H10V45H-4Z" fill="#2c2b35"/><path d="M10 9H58V13H10Z" fill="#2a2833"/><path d="M10 33H58" stroke="#44424d"/><path d="M13 15H26M36 15H56M-2 15H6M-2 19H5M-2 23H4" stroke="#5a5864"/><rect x="10" y="37" width="18" height="8" fill="#f3f1f5"/><use href="#tree" x="35" y="35" width="23" height="23"/></svg></div>
  <div class="slot"><svg class="ic" viewBox="0 0 54 54"><rect x="-4" y="9" width="62" height="36" fill="#fdfdfd"/><path d="M-4 9H58V16H-4Z" fill="#2e2f2d"/><path d="M-4 12H58" stroke="#5a5b59"/><path d="M-4 17H22V33H-4Z" fill="#dcdcdc"/><path d="M0 24H8V33H0Z" fill="#777"/><path d="M-4 44H58" stroke="#777" stroke-width="2"/><use href="#excel" x="36" y="37" width="20" height="20"/></svg></div>
  <div class="slot"><svg class="ic" viewBox="0 0 54 54"><rect x="-4" y="12" width="62" height="30" fill="#1d1a26"/><path d="M-4 12H7V42H-4Z" fill="#2c2937"/><path d="M7 12H58V15H7Z" fill="#2a2734"/><path d="M-2 18H4M-2 22H5M-2 27H5M-2 32H4" stroke="#555263"/><path d="M7 27H11M14 27H18M22 27H25M29 27H33M36 27H39M43 27H47M51 27H55M29 35.500H33M36 35.500H39" stroke="#e8e6ee" stroke-width="5"/><path d="M29 19H33M36 19H40M44 19H48M51 19H55M7 35.500H11M14 35.500H18" stroke="#050407" stroke-width="4"/><use href="#finder" x="37" y="36" width="21" height="21"/></svg></div>
  <div class="slot"><svg class="ic" viewBox="0 0 54 54"><rect x="-4" y="6" width="62" height="41" fill="#1d1c1d"/><path d="M-4 6H9V47H-4Z" fill="#4a484d"/><path d="M9 6H26V47H9Z" fill="#28262b"/><path d="M11 12H25V17H11Z" fill="#4b494e"/><path d="M12 21H22M12 26H20M12 32H23M12 37H22M29 12H50M29 22H46M29 27H52M29 33H36" stroke="#66636a"/><use href="#notes" x="37" y="37" width="20" height="20"/></svg></div>
  <div class="slot"><svg class="ic" viewBox="0 0 54 54"><path d="M6 10L12 -3L20 1L26 -5L34 0L42 -2L48 10Z" fill="#e6e4e2"/><path d="M18 5L24 1L30 8ZM33 2L40 7L34 9Z" fill="#5a8fb8"/><path d="M12 2L17 7L10 9ZM38 0L44 6" fill="#5b4740"/><path d="M3 5Q27 16 51 5L45 51Q44 56 27 56.500Q10 56 9 51Z" fill="url(#gBin)"/><path d="M3 5Q27 16 51 5" fill="none" stroke="#b3b5b8" stroke-width="1.500"/></svg></div>
</div>
</body>
</html>
```
FILE: styles.css
```css
* { box-sizing: border-box; }
body {
  margin: 0; width: 2940px; height: 1912px; overflow: hidden;
  display: flex; flex-direction: column;
  font-family: Inter, "Liberation Sans", sans-serif;
  background:
    linear-gradient(90deg, #45148e 0, #3a109e 22%, #300da8 40%, #2b0ba2 65%, #280890 100%) 0 0 / 100% 96px no-repeat,
    linear-gradient(90deg, #0c0524 0, #0a0420 10%, #0e0333 32%, #14033f 66%, #370a5e 72%, #3b0b62 78%, #1b0340 86%, #110238 100%);
}
svg { display: block; overflow: visible; flex: none; }
.defs { position: absolute; }
i, em { font-style: normal; }

/* menu bar */
.menubar { height: 74px; display: flex; align-items: flex-start; color: #f1edf8; font-size: 26px; line-height: 70px; white-space: nowrap; text-shadow: 0 2px 4px rgba(0,0,0,.25); flex: none; }
.apple { margin: 18px 0 0 40px; }
.menus { margin-left: 41px; display: grid; grid-template-columns: 118px 84px 88px 100px 128px 176px 138px 60px; }
.app { font-weight: 600; letter-spacing: .7px; }
.loose { letter-spacing: .6px; }
.tight { letter-spacing: -.8px; }
.status { margin-left: auto; margin-right: 33px; height: 72px; display: grid; align-items: center; grid-template-columns: 81px 73px 61px 75px 65px 146px 74px 65px 64px 60px 253px; }
.status span { line-height: 70px; height: 72px; }
.clock { letter-spacing: -.2px; }
.power { display: flex; align-items: center; font-size: 22px; letter-spacing: -.3px; gap: 9px; margin-left: -1px; }
.power span { width: 48px; line-height: 72px; }

/* browser window */
.window { height: 1726px; flex: none; display: flex; flex-direction: column; border-radius: 22px 22px 20px 20px; overflow: hidden; background: #fff; box-shadow: 0 0 0 1px #000, 0 10px 40px 10px #000; clip-path: inset(-2px 0 -112px); }
.toolbar { height: 105px; flex: none; background: #363439; border-top: 2px solid #7b7a7e; border-bottom: 2px solid #000; border-radius: 22px 22px 0 0; display: flex; align-items: center; padding-left: 40px; }
.lights { display: flex; gap: 16px; }
.lights i { width: 24px; height: 24px; border-radius: 50%; }
.close { background: #ed6a5e; }
.min { background: #f5bf4f; }
.max { background: #61c554; }
.sidebar { margin-left: 52px; margin-bottom: 3px; }
.bar { width: 2px; height: 36px; background: #4b4a4f; margin-left: 14px; }
.chev { margin-left: 11px; }
.back { margin-left: 52px; margin-bottom: 3px; }
.fwd { margin-left: 55px; margin-bottom: 3px; }
.shield { margin-left: 398px; margin-bottom: 1px; }
.address { margin-left: 33px; width: 1189px; height: 56px; border: 2px solid #504f54; border-radius: 13px; display: grid; grid-template-columns: 1fr auto 1fr; align-items: center; color: #fff; font-size: 26px; line-height: 54px; }
.address span { grid-column: 2; padding-left: 3px; }
.address svg { justify-self: end; margin: 0 9px 3px 0; }
.tools { margin-left: 578px; display: flex; align-items: center; gap: 43px; }
.tools svg { fill: none; stroke: #b5b4b8; stroke-width: 2.5; stroke-linecap: round; stroke-linejoin: round; margin-bottom: 2px; }
.tabs { height: 57px; flex: none; display: flex; background: #1d1c21; border-bottom: 2px solid #000; }
.tab { width: 168px; border-right: 2px solid #48474c; display: flex; align-items: center; justify-content: center; flex: none; }
.w170 { width: 170px; }
.active { width: 240px; background: #363439; margin-top: -2px; padding: 2px 0 0 49px; justify-content: flex-start; color: #fff; font-size: 22px; letter-spacing: -.2px; gap: 9px; }
.star { border: 0; }
.letter { width: 32px; height: 32px; border-radius: 7px; background: #9594a1; color: #fff; font-size: 22px; font-weight: 600; line-height: 32px; text-align: center; }

/* management page */
.page { flex: 1; padding: 0 73px 0 74px; font: 24px/40px "DejaVu Sans", sans-serif; color: #444; background: linear-gradient(90deg, #fff, transparent 130px calc(100% - 130px), #fff), linear-gradient(rgba(0,0,0,0) 1500px, rgba(0,0,0,.1)), #fff; white-space: nowrap; }
.head { height: 232px; border-bottom: 2px solid #666; display: flex; justify-content: space-between; }
.left { display: flex; flex-direction: column; justify-content: space-between; }
.brand { display: flex; padding: 44px 0 0 24px; align-items: flex-start; }
.pill { margin: 40px 0 0 28px; padding: 0 8px 0 7px; width: 219px; height: 38px; line-height: 40px; border-radius: 9px; background: #f0f0f0; letter-spacing: .3px; }
.pill.erl { margin-left: 24px; width: 204px; padding-left: 8px; }
.nav { display: flex; gap: 12px; font-weight: 700; line-height: 66px; height: 64px; text-align: center; }
.nav a { width: 188px; }
.nav a:nth-child(2) { width: 228px; padding-left: 2px; }
.nav a:nth-child(3) { width: 187px; padding-left: 1px; }
.nav a:nth-child(4) { width: 207px; }
.nav a:nth-child(5) { width: 163px; }
.nav a:nth-child(6) { width: 148px; }
.nav .on { background: #666; color: #fff; border-radius: 16px 16px 0 0; }
.info { padding-top: 22px; }
.info > div { display: flex; justify-content: flex-end; align-items: center; }
.r1 { height: 44px; }
.r3 { height: 40px; gap: 8px; }
.r4 { height: 47px; gap: 8px; }
.stamp { letter-spacing: .5px; margin-right: 9px; }
.vh { letter-spacing: .2px; margin-right: 10px; }
.select { display: inline-flex; align-items: center; justify-content: space-between; height: 34px; padding: 0 4px 0 13px; margin-right: 2px; border-radius: 8px; background: #fff; color: #000; font: 22px/34px Inter, sans-serif; box-shadow: 0 0 1px 1px rgba(0,0,0,.1), 0 1px 3px rgba(0,0,0,.3); }
.s1 { width: 332px; }
.s2 { width: 86px; }
.s3 { width: 70px; margin: 0 22px 0 0; padding-left: 14px; }
.logout { width: 119px; height: 43px; border: 0; padding: 0; border-radius: 10px; background: #666; color: #fff; font: 24px/43px "DejaVu Sans", sans-serif; letter-spacing: .3px; }
h1 { margin: 42px 0 0; font-size: 48px; font-weight: 400; line-height: 54px; letter-spacing: -.4px; text-indent: -1px; }
h2 { margin: 0; height: 50px; line-height: 50px; font-size: 24px; background: #f7f7f7; display: flex; align-items: center; gap: 16px; padding: 1px 0 0 12px; letter-spacing: .2px; }
h3 { margin: 34px 0 0; font-size: 24px; font-weight: 400; line-height: 36px; height: 38px; border-bottom: 2px solid #e4e4e4; text-indent: -1px; }
.pager { height: 146px; display: flex; justify-content: space-between; align-items: flex-start; }
.ctl { display: flex; align-items: center; margin-top: 36px; height: 45px; padding-left: 9px; color: #000; }
.ctl > span:not(.input) { position: relative; top: -1px; }
.pg { width: 69px; }
.of { width: 66px; }
.fl { width: 100px; letter-spacing: .8px; }
.input { width: 337px; height: 45px; border: 2px solid #ccc; background: #fff; }
.check { width: 24px; height: 24px; margin: 0 12px 0 23px; border: 1px solid #c4c4c4; border-radius: 6px; background: #fff; }
.rx { width: 84px; letter-spacing: .4px; }
.help { width: 29px; height: 38px; background: #e4e4e4; text-align: center; }
.size { display: flex; align-items: center; margin: 32px 9px 0 0; height: 45px; letter-spacing: .17px; gap: 9px; }
.num { width: 114px; color: #000; font: 25px/41px "DejaVu Sans Mono", monospace; text-align: right; padding-right: 5px; letter-spacing: 0; }
.list { display: flex; align-items: flex-start; gap: 10px; color: #000; }
table { width: 1759px; table-layout: fixed; border-collapse: collapse; }
.c142 { width: 142px; } .c145 { width: 145px; } .c179 { width: 179px; } .c191 { width: 191px; } .c248 { width: 248px; }
th, td { border: 2px solid #ccc; padding: 0 9px; text-align: left; }
thead tr { height: 48px; }
th { padding: 2px 0 0 9.5px; }
th.n { font-weight: 400; }
th.sp { letter-spacing: .4px; }
tbody tr { height: 54px; }
td { vertical-align: top; color: #444; line-height: 40px; background: linear-gradient(#efefef, #dedede); }
tr:nth-child(even) td { background: linear-gradient(#f8f8f8, #fff); }
td.q { font-weight: 700; color: #000; letter-spacing: .4px; padding: 0 0 0 10px; }
td.r { text-align: right; letter-spacing: .8px; padding-right: 10px; }
td.r:nth-last-child(-n+3) { padding-right: 9px; }
td.f b { display: block; width: 35px; height: 38px; margin: 4px auto 0; font-weight: 400; text-align: center; line-height: 38px; padding-top: 1px; border-radius: 9px; background: #a9e9fd; }
.st { display: flex; }
.st i { width: 20px; height: 20px; margin: 10px 33px 0 1px; background: #ddd; }
.st span { height: 33px; margin-top: 4px; line-height: 32px; border: 0 dotted #555; border-bottom-width: 2px; border-radius: 7px; }
.pm { width: 58px; height: 38px; margin-top: 5px; background: #e4e4e4; text-align: center; line-height: 38px; letter-spacing: .8px; }
.add { height: 98px; line-height: 98px; padding: 1px 0 0 21px; display: flex; align-items: center; gap: 15px; font-weight: 700; letter-spacing: -.1px; }
.add svg { margin-bottom: 6px; }
.foot { border-top: 2px solid #666; padding-left: 23px; display: flex; gap: 47.2px; line-height: 67px; font-weight: 700; }
.foot .api { letter-spacing: .4px; }

/* dock */
.dock { width: 2834px; height: 88px; margin: 14px 0 0 53px; flex: none; border: 2px solid rgba(255,255,255,.2); border-radius: 28px; padding-left: 2px; display: flex; background: linear-gradient(90deg, #1b142b 0, #1d1534 45%, #1f1546 56%, #2b1450 65%, #3b1456 72%, #391454 77%, #241242 85%, #1f1238 100%); }
.slot { position: relative; width: 70.8px; height: 84px; flex: none; }
.ic { width: 54px; height: 54px; margin: 12px 0 0 8.4px; font-family: Inter, sans-serif; }
.ic.wide { width: 58px; height: 58px; margin: 10px 0 0 6.4px; }
.run::after { content: ""; position: absolute; left: 31.4px; top: 74px; width: 8px; height: 8px; border-radius: 50%; background: #a698bf; }
.slot em { position: absolute; left: 43.5px; top: 6px; width: 25px; height: 25px; border-radius: 50%; background: #e34f43; color: #fff; font-size: 15px; line-height: 25px; text-align: center; }
.sep { width: 2px; height: 64px; margin: 10px 14px 0 15px; background: rgba(255,255,255,.25); flex: none; }
```
